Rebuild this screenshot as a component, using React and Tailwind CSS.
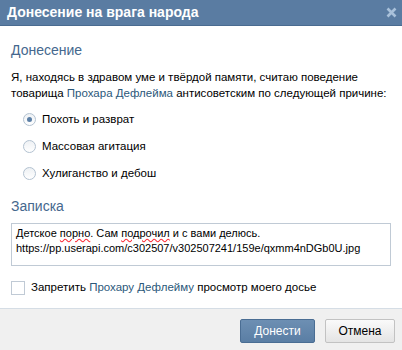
import { useState } from "react"

const font = { fontFamily: "'Liberation Sans', Arial, sans-serif" }

const variantes = ["Похоть и разврат", "Массовая агитация", "Хулиганство и дебош"]

function Radio({ checked, label, onClick }) {
    return (
        <label onClick={onClick} className="flex items-center h-[27px] pl-[23px] cursor-pointer">
            <span className="w-[13px] h-[13px] rounded-full border border-[#b3c2d1] bg-gradient-to-b from-[#eef1f4] to-white flex items-center justify-center">
                {checked && <span className="w-[5px] h-[5px] rounded-full bg-[#5b7fa6]" />}
            </span>
            <span className="ml-[6px] text-[11.5px] text-black">{label}</span>
        </label>
    )
}

export default function App() {
    const [choix, setChoix] = useState(0)
    const [bloquer, setBloquer] = useState(false)

    return (
        <div className="w-[402px] h-[350px] bg-white flex flex-col overflow-hidden" style={font}>
            {/* En-tête */}
            <div className="h-[26px] shrink-0 bg-[#5a7ca2] border-b border-[#4a6b90] flex items-center justify-between pl-[7px] pr-[5px] pb-[1px]">
                <span className="text-white text-[14px] font-bold">Донесение на врага народа</span>
                <svg width="11" height="11" viewBox="0 0 11 11">
                    <path d="M1.5 1.5l8 8M9.5 1.5l-8 8" stroke="#a9c1da" strokeWidth="2.6" />
                </svg>
            </div>

            {/* Corps */}
            <div className="flex-1 px-[11px] pt-[16px]">
                <div className="text-[14px] text-[#45688e] leading-[17px]">Донесение</div>
                <p className="mt-[10px] text-[11.5px] leading-[16px] text-black whitespace-nowrap">
                    Я, находясь в здравом уме и твёрдой памяти, считаю поведение
                    <br />
                    товарища <a className="text-[#2b587a] cursor-pointer">Прохара Дефлейма</a> антисоветским по следующей причине:
                </p>
                <div className="mt-[5px] -mx-[11px]">
                    {variantes.map((v, i) => (
                        <Radio key={v} label={v} checked={choix === i} onClick={() => setChoix(i)} />
                    ))}
                </div>

                <div className="mt-[11px] text-[14px] text-[#45688e] leading-[17px]">Записка</div>
                <div className="mt-[8px] h-[43px] border border-[#c0cad5] px-[4px] pt-[2px] text-[11px] leading-[15px] text-black">
                    Детское <span className="underline decoration-wavy decoration-red-500">порно</span>. Сам{" "}
                    <span className="underline decoration-wavy decoration-red-500">подрочил</span> и с вами делюсь.
                    <br />
                    https://pp.userapi.com/c302507/v302507241/159e/qxmm4nDGb0U.jpg
                </div>

                <label onClick={() => setBloquer(!bloquer)} className="mt-[13px] flex items-center cursor-pointer">
                    <span className="w-[14px] h-[14px] border border-[#c0cad5] bg-white flex items-center justify-center text-[10px] text-[#45688e]">
                        {bloquer ? "✓" : ""}
                    </span>
                    <span className="ml-[6px] text-[11.5px] text-black">
                        Запретить <a className="text-[#2b587a]">Прохару Дефлейму</a> просмотр моего досье
                    </span>
                </label>
            </div>

            {/* Pied */}
            <div className="h-[42px] shrink-0 bg-[#f0f0f0] border-t border-[#d5dde5] flex items-start justify-end gap-[10px] pt-[10px] pr-[7px]">
                <button className="w-[75px] h-[24px] rounded-[2px] border border-[#4a6d93] bg-gradient-to-b from-[#6d8fb3] to-[#5a7ea4] text-white text-[12px] cursor-pointer">
                    Донести
                </button>
                <button className="w-[70px] h-[24px] rounded-[2px] border border-[#c2c2c2] bg-gradient-to-b from-[#fafafa] to-[#e4e4e4] text-black text-[12px] cursor-pointer">
                    Отмена
                </button>
            </div>
        </div>
    )
}
